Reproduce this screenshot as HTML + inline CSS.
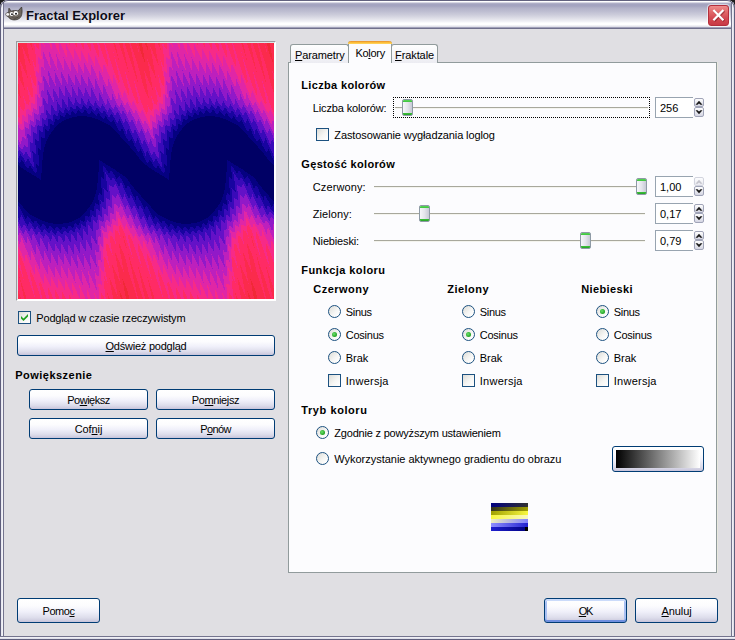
<!DOCTYPE html><html><head><meta charset="utf-8"><title>Fractal Explorer</title><style>
*{box-sizing:border-box;margin:0;padding:0}
html,body{width:735px;height:640px;overflow:hidden;background:#1c1c1c}
body{font-family:"Liberation Sans",sans-serif;font-size:11px;color:#000;position:relative}
#win{position:absolute;left:0;top:0;width:735px;height:640px;background:#e0dfe3;border-radius:8px 8px 0 0;overflow:hidden}
.a{position:absolute}
.t{position:absolute;white-space:nowrap;line-height:13px;height:13px}
.b{font-weight:bold}
u{text-decoration:underline;text-underline-offset:1px;text-decoration-thickness:1px}
.btn{position:absolute;border:1px solid #003c74;border-radius:3px;background:linear-gradient(#ffffff 0%,#fcfcfe 30%,#f0f0fa 55%,#dedeec 80%,#cfcde0 94%,#c6c2da 100%);text-align:center;font-size:11px;white-space:nowrap}
.btn.def{box-shadow:inset 0 2px 0 0 #cbdbfa, inset 0 -2px 0 0 #6f8fe0, inset 2px 0 0 0 #a9c0f2, inset -2px 0 0 0 #a9c0f2}
.cb{position:absolute;width:13px;height:13px;border:1px solid #1c5180;background:linear-gradient(135deg,#dcdcd7,#f6f6f4 55%,#ffffff)}
.rb{position:absolute;width:13px;height:13px;border:1px solid #1c5180;border-radius:50%;background:linear-gradient(135deg,#dcdcd7,#f6f6f4 55%,#ffffff 85%)}
.rb.on::after{content:"";position:absolute;left:3px;top:3px;width:5px;height:5px;border-radius:50%;background:radial-gradient(circle at 40% 40%,#6ce06c,#21a121 70%)}
.line{position:absolute;height:2px;border-top:1px solid #a8a89c;border-bottom:1px solid #f4f4ee}
.sp{position:absolute;border:1px solid #98a4b0;border-right:none;background:#fff;width:38px;height:21px;line-height:19px;padding-left:4px;padding-top:1px;font-size:11px;white-space:nowrap}
.th{position:absolute;width:11px;height:17px;border:1px solid #8e9aa5;border-radius:2px;background:linear-gradient(90deg,#f6f6fa,#e4e5ec 50%,#c8cad6);overflow:hidden}
.th::before{content:"";position:absolute;left:0;right:0;top:0;height:2px;background:linear-gradient(#5ad25a,#3cc43c)}
.th::after{content:"";position:absolute;left:0;right:0;bottom:0;height:2px;background:linear-gradient(#3cc43c,#27a027)}
.sb{position:absolute;width:10px;height:10px;border:1px solid #a0a4b8;border-radius:2px;background:linear-gradient(#fefefe,#d4d5e2)}
.sb.dis{opacity:.45}
.tab{position:absolute;border:1px solid #919b9c;border-bottom:none;border-radius:3px 3px 0 0;background:linear-gradient(#fefefe,#f4f4f8 60%,#ececf2);white-space:nowrap}
</style></head><body><div id="win">
<div class="a" style="left:0;top:0;width:735px;height:29px;background:linear-gradient(#a0a0bc 0,#a0a0bc 1px,#ffffff 1px,#ffffff 2px,#d8d8e4 2px,#d8d8e4 3px,#b8b8cc 3px,#a4a4c0 4px,#a4a4c0 6px,#b2b2c8 8px,#bcbcd0 11px,#cdcddb 15px,#e2e2ea 19px,#f4f4f8 22px,#ffffff 23px,#ffffff 25px,#e4e4ec 26px,#e0e0e8 27px,#a0a0b8 27px,#a0a0b8 28px,#70708c 28px,#70708c 29px)"></div>
<div class="a" style="left:0;top:2px;width:4px;height:638px;background:linear-gradient(90deg,#5e5e7c 0,#5e5e7c 1px,#e4e4ee 1px,#f6f6fa 3px,#74748e 3px)"></div>
<div class="a" style="left:731px;top:2px;width:4px;height:638px;background:linear-gradient(90deg,#74748e 0,#74748e 1px,#f6f6fa 1px,#d8d8e4 3px,#5e5e7c 3px)"></div>
<div class="a" style="left:0;top:636px;width:735px;height:4px;background:linear-gradient(#74748e 0,#74748e 1px,#f6f6fa 1px,#d8d8e4 3px,#5e5e7c 3px)"></div>
<div class="a" style="left:0;top:29px;width:4px;height:607px;background:linear-gradient(90deg,#5e5e7c 0,#5e5e7c 1px,#e4e4ee 1px,#f6f6fa 3px,#74748e 3px)"></div>
<div class="a" style="left:0;top:0;width:735px;height:40px;border:1px solid #62627e;border-bottom:none;border-radius:8px 8px 0 0;pointer-events:none;clip-path:inset(0 0 28px 0)"></div>
<svg class="a" style="left:5px;top:6px" width="18" height="16" viewBox="0 0 18 16"><path d="M4 2.2 L6.2 5.2 C8 4.4 11 4.4 13 5 L16.6 1 C17.4 4 17.2 8 16 10.5 C14.5 13.6 9.5 14.6 6.5 13.4 C4.6 12.7 3.6 11.6 3.4 10.4 C1.6 10.6 0.6 9.2 1 7.8 C1.4 6.6 2.8 6.4 3.8 7 C3.6 5.4 3.6 3.6 4 2.2z" fill="#6e675f" stroke="#3a3632" stroke-width=".8"/><path d="M5.5 10.5 C8 12.6 12.5 12.3 14.8 9.5 C13.8 12.4 9 13.8 5.5 10.5z" fill="#3d3833"/><ellipse cx="6.6" cy="8" rx="1.9" ry="1.9" fill="#fff"/><ellipse cx="10.8" cy="7.3" rx="2.3" ry="2.2" fill="#fff"/><circle cx="7" cy="8.2" r=".9" fill="#111"/><circle cx="11" cy="7.7" r="1" fill="#111"/><ellipse cx="2.6" cy="8.4" rx="1.5" ry="1.3" fill="#f4f4f4"/></svg>
<div class="t b" style="left:26px;top:8px;font-size:13px;line-height:16px;height:16px;color:#0c0c18;letter-spacing:0.000px;text-shadow:0 0 1px rgba(255,255,255,.6)">Fractal Explorer</div>
<div class="a" style="left:708px;top:5px;width:21px;height:21px;border:1px solid #b4303c;border-radius:3px;background:linear-gradient(#ee8c8c 0,#e06668 35%,#d44a52 65%,#c83a46 100%);box-shadow:0 0 0 1px rgba(255,255,255,.55)"></div>
<svg class="a" style="left:708px;top:5px" width="21" height="21"><path d="M5.6 5.2 L15.6 15.4 M15.6 5.2 L5.6 15.4" stroke="#7a1c24" stroke-width="2.6" transform="translate(.6,.6)" opacity=".55"/><path d="M5.4 5 L15.4 15.2 M15.4 5 L5.4 15.2" stroke="#fff" stroke-width="2.2"/></svg>
<div class="a" style="left:16px;top:41px;width:260px;height:260px;border:1px solid;border-color:#9a9a9e #fff #fff #9a9a9e;background:#fff;box-shadow:inset 1px 1px 0 #dde6e6"></div>
<svg class="a" style="left:18px;top:43px" width="256" height="256" viewBox="0 0 256 256" shape-rendering="crispEdges"><rect width="256" height="256" fill="#000065"/><path fill="#050181" d="M0 0h256v122h-1v-1h-1v-1h-1v-1h-1v-1h-1v-1h-1v-1h-1v-2h-1v-1h-1v-1h-1v-2h-1v-1h-1v-1h-1v-1h-1v-1h-1v-1h-1v-2h-1v-1h-1v-1h-1v-1h-1v-1h-1v-1h-1v-1h-1v-1h-1v-1h-1v-1h-1v-2h-1v-1h-1v-1h-1v-1h-1v-1h-1v-1h-1v-1h-1v-1h-1v-1h-1v-1h-1v-1h-2v-1h-2v-1h-2v-1h-2v-1h-2v-1h-2v-1h-3v-1h-3v-1h-5v-1h-10v1h-5v1h-3v1h-3v1h-2v1h-2v1h-1v1h-2v1h-1v1h-1v1h-1v1h-1v1h-1v2h-1v1h-1v1h-1v2h-1v1h-1v2h-1v2h-1v2h-1v3h-1v3h-1v5h-1v8h-1v13h-1v7h-1v-1h-1v-1h-2v-1h-1v-1h-2v-1h-2v-1h-1v-1h-2v-1h-2v-1h-1v-1h-2v-1h-1v-1h-2v-1h-1v-1h-1v-1h-2v-1h-1v-1h-1v-1h-1v-1h-1v-1h-1v-1h-1v-2h-1v-1h-1v-1h-1v-2h-1v-1h-1v-1h-1v-1h-1v-1h-1v-1h-1v-2h-1v-1h-1v-1h-1v-1h-1v-1h-1v-1h-1v-1h-1v-1h-1v-1h-1v-1h-1v-2h-1v-1h-1v-1h-1v-1h-1v-1h-1v-1h-1v-1h-1v-1h-1v-1h-1v-1h-1v-1h-2v-1h-2v-1h-2v-1h-2v-1h-2v-1h-2v-1h-3v-1h-3v-1h-5v-1h-10v1h-5v1h-3v1h-3v1h-2v1h-2v1h-1v1h-2v1h-1v1h-1v1h-1v1h-1v1h-1v2h-1v1h-1v1h-1v2h-1v1h-1v2h-1v2h-1v2h-1v3h-1v3h-1v5h-1v8h-1v13h-1v7h-1v-1h-1v-1h-2v-1h-1v-1h-2v-1h-2v-1h-1v-1h-2v-1h-2v-1h-1v-1h-2v-1h-1v-1h-2v-1h-1v-1h-1v-1h-1zM81 117h1v1h2v1h1v1h2v1h1v1h2v1h2v1h1v1h2v1h2v1h1v1h1v1h2v1h1v1h2v1h1v1h2v1h1v1h1v1h1v2h1v1h1v2h1v1h1v1h1v1h1v2h1v1h1v1h1v1h1v1h1v1h1v1h1v2h1v1h1v1h1v1h1v1h1v1h1v1h1v1h1v1h1v1h1v2h1v1h1v1h1v1h1v1h1v1h1v1h1v1h2v1h2v1h2v1h2v1h2v1h2v1h3v1h3v1h5v1h10v-1h6v-1h3v-1h2v-1h2v-1h2v-1h2v-1h1v-1h1v-1h1v-1h1v-1h1v-1h1v-1h1v-2h1v-1h1v-1h1v-2h1v-1h1v-2h1v-2h1v-3h1v-3h1v-4h1v-7h1v-11h1v-12h1v1h2v1h1v1h2v1h1v1h2v1h2v1h1v1h2v1h2v1h1v1h1v1h2v1h1v1h2v1h1v1h2v1h1v1h1v1h1v2h1v1h1v2h1v1h1v1h1v1h1v2h1v1h1v1h1v1h1v1h1v1h1v1h1v2h1v1h1v1h1v1h1v1h1v98h-256v-97h1v1h1v1h1v1h1v1h1v2h1v1h1v1h1v1h1v1h1v1h1v1h1v1h2v1h2v1h2v1h2v1h2v1h2v1h3v1h3v1h5v1h10v-1h6v-1h3v-1h2v-1h2v-1h2v-1h2v-1h1v-1h1v-1h1v-1h1v-1h1v-1h1v-1h1v-2h1v-1h1v-1h1v-2h1v-1h1v-2h1v-2h1v-3h1v-3h1v-4h1v-7h1v-11h1z"/><path fill="#1804a0" d="M0 0h256v117h-1v-2h-1v-2h-1v-3h-1v-2h-1v-2h-1v2h-1v1h-1v-1h-1v-2h-1v-2h-1v-1h-1v-3h-1v-2h-1v-2h-1v1h-1v1h-2v-2h-1v-1h-1v-2h-1v-2h-1v-3h-1v-2h-2v2h-2v-1h-1v-2h-1v-2h-1v-2h-1v-2h-1v-2h-1v1h-1v1h-2v-1h-1v-1h-1v-1h-1v-2h-1v-1h-1v2h-1v1h-1v-1h-1v-1h-1v-1h-1v-2h-1v-1h-1v1h-1v2h-1v-1h-1v-1h-1v-1h-1v-1h-1v-1h-1v2h-1v1h-2v-1h-1v-2h-1v-1h-2v2h-1v1h-2v-1h-1v-1h-1v-1h-1v1h-1v2h-1v1h-1v-1h-1v-1h-1v-1h-1v1h-1v3h-2v-1h-1v-1h-2v2h-1v2h-2v-1h-2v-1h-1v4h-1v1h-2v-1h-2v3h-1v3h-2v-1h-2v5h-1v2h-2v-1h-1v-1h-1v9h-3v-1h-1v13h-1v-1h-1v-1h-1v7h1v11h-1v-1h-1v-1h-1v4h1v4h-1v1h-1v-1h-1v-1h-1v-2h-1v-1h-1v-2h-2v2h-2v-1h-1v-1h-1v-2h-1v-2h-1v-1h-1v-1h-1v2h-1v1h-1v-1h-1v-2h-1v-2h-1v-2h-1v-3h-1v-2h-1v-2h-1v2h-1v1h-1v-1h-1v-2h-1v-2h-1v-1h-1v-3h-1v-2h-1v-2h-1v1h-1v1h-2v-2h-1v-1h-1v-2h-1v-2h-1v-3h-1v-2h-2v2h-2v-1h-1v-2h-1v-2h-1v-2h-1v-2h-1v-2h-1v1h-1v1h-2v-1h-1v-1h-1v-1h-1v-2h-1v-1h-1v2h-1v1h-1v-1h-1v-1h-1v-1h-1v-2h-1v-1h-1v1h-1v2h-1v-1h-1v-1h-1v-1h-1v-1h-1v-1h-1v2h-1v1h-2v-1h-1v-2h-1v-1h-2v2h-1v1h-2v-1h-1v-1h-1v-1h-1v1h-1v2h-1v1h-1v-1h-1v-1h-1v-1h-1v1h-1v3h-2v-1h-1v-1h-2v2h-1v2h-2v-1h-2v-1h-1v4h-1v1h-2v-1h-2v3h-1v3h-2v-1h-2v5h-1v2h-2v-1h-1v-1h-1v9h-3v-1h-1v13h-1v-1h-1v-1h-1v7h1v11h-1v-1h-1v-1h-1v4h1v4h-1v1h-1v-1h-1v-1h-1v-2h-1v-1h-1v-2h-2v2h-2v-1h-1v-1h-1v-2h-1v-2h-1v-1h-1v-1h-1v2h-1v1h-1v-1h-1zM85 123h1v1h1v1h1v2h1v1h1v2h2v-2h2v1h1v2h1v1h1v2h1v2h1v-1h1v-1h1v-1h1v2h1v1h1v2h1v2h1v2h1v3h2v-2h2v1h1v2h1v3h1v2h1v2h1v1h1v3h1v-4h2v2h1v2h1v1h1v2h1v2h1v2h1v2h1v-2h1v-1h1v1h1v2h1v2h1v2h1v2h1v2h1v2h1v-1h1v-2h1v1h1v1h1v1h1v2h1v1h1v1h1v-2h3v2h1v1h1v1h1v2h1v-1h1v-2h2v1h1v1h1v2h1v1h1v-1h1v-2h2v1h1v1h1v1h1v1h1v-2h1v-1h2v1h1v1h1v1h1v-1h1v-2h3v1h1v1h1v-1h1v-2h3v1h1v1h1v-1h1v-3h1v-1h1v1h1v1h2v-2h1v-3h1v1h2v1h1v-1h1v-5h3v1h1v-1h1v-6h2v1h2v-5h1v-3h1v1h2v1h1v-5h-1v-5h1v-2h1v1h1v1h1v-7h-1v-11h1v1h1v1h1v-7h-1v-6h1v1h1v1h1v2h1v1h1v2h2v-2h2v1h1v2h1v1h1v2h1v2h1v-1h1v-1h1v-1h1v2h1v1h1v2h1v2h1v2h1v3h2v-2h2v1h1v2h1v3h1v2h1v2h1v1h1v3h1v-4h2v2h1v2h1v1h1v2h1v2h1v2h1v-1h1v-2h1v95h-256v-93h1v1h1v2h1v2h1v2h1v2h1v2h1v2h1v-1h1v-2h1v1h1v1h1v1h1v2h1v1h1v1h1v-2h3v2h1v1h1v1h1v2h1v-1h1v-2h2v1h1v1h1v2h1v1h1v-1h1v-2h2v1h1v1h1v1h1v1h1v-2h1v-1h2v1h1v1h1v1h1v-1h1v-2h3v1h1v1h1v-1h1v-2h3v1h1v1h1v-1h1v-3h1v-1h1v1h1v1h2v-2h1v-3h1v1h2v1h1v-1h1v-5h3v1h1v-1h1v-6h2v1h2v-5h1v-3h1v1h2v1h1v-5h-1v-5h1v-2h1v1h1v1h1v-7h-1v-11h1v1h1v1h1v-7h-1z"/><path fill="#390ab9" d="M0 0h256v113h-1v-3h-1v-2h-1v-2h-1v-2h-1v-2h-1v-2h-1v-3h-1v-2h-1v3h-1v2h-1v-2h-1v-2h-1v-2h-1v-2h-1v-2h-1v-2h-1v-2h-1v1h-1v4h-1v-3h-1v-2h-1v-2h-1v-2h-1v-2h-1v-2h-1v-2h-1v2h-1v2h-1v-1h-1v-2h-1v-2h-1v-1h-1v-2h-1v-1h-1v1h-1v2h-2v-2h-1v-1h-1v-2h-1v-1h-2v2h-2v-1h-1v-1h-1v-2h-1v-1h-2v2h-1v1h-1v-1h-1v-1h-1v-2h-1v-1h-2v2h-1v1h-1v-1h-1v-1h-1v-1h-1v-1h-1v2h-1v2h-2v-1h-1v-1h-1v-1h-2v3h-3v-1h-1v-1h-2v3h-1v1h-1v-1h-1v-1h-1v-1h-1v2h-1v3h-2v-1h-1v-1h-1v-1h-1v3h-1v3h-2v-1h-1v-1h-1v1h-1v6h-1v-1h-1v-1h-3v7h-2v-1h-1v-1h-1v3h-1v5h-2v-1h-1v-1h-1v11h-2v-1h-1v-1h-1v6h1v9h-1v-1h-1v-1h-1v-1h-1v2h1v9h1v5h-1v-1h-1v-2h-1v-1h-1v-2h-1v-2h-2v2h-1v1h-1v-2h-1v-2h-1v-1h-1v-2h-1v-2h-1v-2h-1v1h-1v4h-1v-3h-1v-2h-1v-2h-1v-2h-1v-2h-1v-2h-1v-3h-1v-2h-1v3h-1v2h-1v-2h-1v-2h-1v-2h-1v-2h-1v-2h-1v-2h-1v-2h-1v1h-1v4h-1v-3h-1v-2h-1v-2h-1v-2h-1v-2h-1v-2h-1v-2h-1v2h-1v2h-1v-1h-1v-2h-1v-2h-1v-1h-1v-2h-1v-1h-1v1h-1v2h-2v-2h-1v-1h-1v-2h-1v-1h-2v2h-2v-1h-1v-1h-1v-2h-1v-1h-2v2h-1v1h-1v-1h-1v-1h-1v-2h-1v-1h-2v2h-1v1h-1v-1h-1v-1h-1v-1h-1v-1h-1v2h-1v2h-2v-1h-1v-1h-1v-1h-2v3h-3v-1h-1v-1h-2v3h-1v1h-1v-1h-1v-1h-1v-1h-1v2h-1v3h-2v-1h-1v-1h-1v-1h-1v3h-1v3h-2v-1h-1v-1h-1v1h-1v6h-1v-1h-1v-1h-3v7h-2v-1h-1v-1h-1v3h-1v5h-2v-1h-1v-1h-1v11h-2v-1h-1v-1h-1v6h1v9h-1v-1h-1v-1h-1v-1h-1v2h1v9h1v5h-1v-1h-1v-2h-1v-1h-1v-2h-1v-2h-2v2h-1v1h-1v-2h-1v-2h-1v-1h-1v-1h-1v-2h-1v2h-1v2h-1zM87 129h1v2h-1zM215 129h1v2h-1zM88 131h1v1h1v2h1v1h1v2h2v-2h2v1h1v2h1v1h1v2h1v2h2v-3h2v2h1v3h1v2h1v2h1v2h1v2h1v2h2v-3h1v1h1v2h1v2h1v2h1v2h1v2h1v2h1v1h1v-3h2v2h1v1h1v3h1v2h1v2h1v2h1v2h1v-3h1v-2h1v2h1v2h1v2h1v2h1v1h1v2h1v-2h1v-2h1v1h1v1h1v2h1v1h1v2h2v-2h1v-1h1v2h1v1h1v1h1v2h2v-2h1v-1h1v1h1v1h1v1h1v1h2v-2h1v-1h1v2h1v1h1v1h1v1h1v-2h1v-2h2v1h1v1h1v1h2v-2h1v-1h2v1h1v1h2v-2h1v-1h2v1h1v1h2v-3h1v-2h1v1h1v1h1v1h1v-2h1v-4h1v1h1v1h2v1h1v-5h1v-2h1v1h1v1h2v-5h1v-2h1v1h1v1h2v-8h2v1h1v1h1v-7h1v-3h-1v-1h1v1h1v1h2v-13h-1v-1h1v1h1v1h1v1h1v1h1v-2h-1v-9h-1v-7h1v1h1v2h1v1h1v2h2v-2h2v1h1v2h1v1h1v2h1v2h2v-3h2v2h1v3h1v2h1v2h1v2h1v2h1v2h2v-3h1v1h1v2h1v2h1v2h1v2h1v2h1v2h1v1h1v-3h2v1h1v2h1v1h1v1h1v1h1v87h-256v-81h1v2h1v-3h1v-2h1v2h1v2h1v2h1v2h1v1h1v2h1v-2h1v-2h1v1h1v1h1v2h1v1h1v2h2v-2h1v-1h1v2h1v1h1v1h1v2h2v-2h1v-1h1v1h1v1h1v1h1v1h2v-2h1v-1h1v2h1v1h1v1h1v1h1v-2h1v-2h2v1h1v1h1v1h2v-2h1v-1h2v1h1v1h2v-2h1v-1h2v1h1v1h2v-3h1v-2h1v1h1v1h1v1h1v-2h1v-4h1v1h1v1h2v1h1v-5h1v-2h1v1h1v1h2v-5h1v-2h1v1h1v1h2v-8h2v1h1v1h1v-7h1v-3h-1v-1h1v1h1v1h2v-13h-1v-1h1v1h1v1h1v1h1v1h1v-2h-1v-9h-1z"/><path fill="#6411c7" d="M0 0h256v99h-1v-2h-1v1h-1v3h-1v-1h-1v-3h-1v-2h-1v-2h-1v-2h-1v-2h-1v-2h-2v3h-2v-2h-1v-2h-1v-3h-1v-2h-1v-2h-1v-1h-1v-2h-1v3h-1v1h-1v-2h-1v-2h-1v-2h-1v-2h-1v-2h-1v-1h-1v1h-1v2h-2v-2h-1v-1h-1v-2h-1v-1h-1v-1h-1v2h-1v2h-1v-2h-1v-1h-1v-2h-1v-1h-1v-2h-1v2h-1v2h-1v-1h-1v-1h-1v-1h-1v-2h-1v-2h-1v2h-1v3h-1v-1h-1v-1h-1v-1h-1v-2h-1v-2h-1v3h-1v3h-1v-1h-1v-1h-1v-2h-1v-2h-1v-1h-1v6h-2v-1h-1v-1h-1v-2h-1v-2h-1v5h-1v2h-1v-1h-1v-2h-1v-1h-1v-2h-1v-2h-1v10h-1v-2h-1v-1h-1v-2h-1v-2h-1v-1h-1v9h-1v-1h-1v-2h-1v-1h-1v-2h-1v9h-2v-1h-1v-2h-1v-2h-1v-1h-1v10h-1v-1h-1v-1h-1v-2h-1v-1h-1v5h1v3h-1v2h-2v-1h-1v-1h-1v8h-3v-1h-1v1h-1v8h-1v-1h-2v-1h-1v11h-2v-1h-1v10h1v6h-1v-1h-1v-1h-1v-2h-1v-2h-2v2h-1v1h-1v-2h-1v-2h-1v-3h-1v-2h-1v-2h-1v-2h-1v-2h-1v1h-1v3h-1v-1h-1v-3h-1v-2h-1v-2h-1v-2h-1v-2h-1v-2h-2v3h-2v-2h-1v-2h-1v-3h-1v-2h-1v-2h-1v-1h-1v-2h-1v3h-1v1h-1v-2h-1v-2h-1v-2h-1v-2h-1v-2h-1v-1h-1v1h-1v2h-2v-2h-1v-1h-1v-2h-1v-1h-1v-1h-1v2h-1v2h-1v-2h-1v-1h-1v-2h-1v-1h-1v-2h-1v2h-1v2h-1v-1h-1v-1h-1v-1h-1v-2h-1v-2h-1v2h-1v3h-1v-1h-1v-1h-1v-1h-1v-2h-1v-2h-1v3h-1v3h-1v-1h-1v-1h-1v-2h-1v-2h-1v-1h-1v6h-2v-1h-1v-1h-1v-2h-1v-2h-1v5h-1v2h-1v-1h-1v-2h-1v-1h-1v-2h-1v-2h-1v10h-1v-2h-1v-1h-1v-2h-1v-2h-1v-1h-1v9h-1v-1h-1v-2h-1v-1h-1v-2h-1v9h-2v-1h-1v-2h-1v-2h-1v-1h-1v10h-1v-1h-1v-1h-1v-2h-1v-1h-1v5h1v3h-1v2h-2v-1h-1v-1h-1v8h-3v-1h-1v1h-1v8h-1v-1h-2v-1h-1v11h-2v-1h-1v10h1v6h-1v-1h-1v-1h-1v-2h-1v-2h-2v2h-1v1h-1v-2h-1v-1h-1v-1h-1v-1h-1v1h-1zM39 57h-1v1h1zM167 57h-1v1h1zM97 141h1v2h1v2h1v2h1v3h1v2h1v2h1v2h1v-2h1v-3h1v3h1v2h1v2h1v2h1v2h1v2h1v2h1v-1h1v-2h2v2h1v2h1v2h1v2h1v3h1v2h2v-2h1v-1h1v2h1v2h1v2h1v2h1v2h1v2h1v-1h1v-2h2v1h1v2h1v1h1v2h2v-2h1v-1h1v1h1v2h1v1h1v2h1v1h1v-1h1v-2h2v2h1v1h1v1h1v2h1v-2h1v-2h1v1h1v1h1v1h1v2h1v2h1v-2h1v-4h1v1h1v1h1v2h1v2h1v1h1v-6h2v1h1v1h1v2h1v2h1v-1h1v-6h1v1h1v1h1v2h1v2h1v1h1v-8h1v1h1v1h1v2h1v2h1v1h1v-9h1v1h1v2h1v1h1v2h1v2h1v-11h1v2h1v1h1v2h1v1h1v-10h1v1h1v2h1v1h1v2h1v-11h1v1h1v1h1v1h1v-3h1v-5h2v1h1v1h1v-10h1v1h1v1h2v-11h1v1h2v1h1v-9h-1v-6h1v1h2v1h2v-2h1v-1h1v2h1v2h1v2h1v3h1v2h1v2h1v2h1v-2h1v-3h1v3h1v2h1v2h1v2h1v2h1v2h1v2h1v-1h1v-2h2v2h1v2h1v2h1v2h1v1h1v-1h1v-2h2v1h1v1h1v1h1v84h-256v-77h1v2h1v2h1v2h1v-1h1v-2h2v1h1v2h1v1h1v2h2v-2h1v-1h1v1h1v2h1v1h1v2h1v1h1v-1h1v-2h2v2h1v1h1v1h1v2h1v-2h1v-2h1v1h1v1h1v1h1v2h1v2h1v-2h1v-4h1v1h1v1h1v2h1v2h1v1h1v-6h2v1h1v1h1v2h1v2h1v-1h1v-6h1v1h1v1h1v2h1v2h1v1h1v-8h1v1h1v1h1v2h1v2h1v1h1v-9h1v1h1v2h1v1h1v2h1v2h1v-11h1v2h1v1h1v2h1v1h1v-10h1v1h1v2h1v1h1v2h1v-11h1v1h1v1h1v1h1v-3h1v-5h2v1h1v1h1v-10h1v1h1v1h2v-11h1v1h2v1h1v-9h-1v-6h1v1h2v1h2v-2h1z"/><path fill="#9119c8" d="M0 0h256v95h-1v-3h-1v-2h-1v-2h-1v-2h-1v2h-1v2h-1v-1h-1v-2h-1v-2h-1v-2h-1v-2h-1v-2h-1v-2h-2v2h-2v-2h-1v-2h-1v-2h-1v-2h-1v-1h-1v-2h-2v3h-1v-1h-1v-2h-1v-1h-1v-2h-1v-1h-1v-2h-1v2h-1v2h-1v-1h-1v-1h-1v-2h-1v-2h-1v-2h-1v-2h-1v5h-1v1h-1v-2h-1v-2h-1v-2h-1v-2h-1v-2h-1v-2h-1v8h-1v-1h-1v-2h-1v-2h-1v-2h-1v-2h-1v-2h-1v-2h-1v9h-1v-1h-1v-2h-1v-2h-1v-2h-1v-2h-1v5h-1v3h-1v-2h-1v-2h-1v-2h-1v-1h-1v-2h-1v9h-1v-1h-1v-2h-1v-2h-1v-2h-1v-2h-1v10h-1v-2h-1v-2h-1v-1h-1v-2h-1v-2h-1v-2h-1v10h-1v-1h-1v-2h-1v-2h-1v-2h-1v-2h-1v11h-1v-2h-1v-2h-1v-2h-1v-1h-1v-2h-1v8h1v5h-1v-2h-1v-2h-1v-2h-1v-2h-1v-2h-1v-2h-1v5h1v9h-1v-1h-1v-2h-1v-2h-1v-1h-1v7h1v8h-3v2h-1v6h-1v-1h-2v-1h-1v6h-1v2h-2v-1h-1v-1h-1v11h-1v-1h-1v-1h-2v4h1v9h-2v-1h-1v-2h-1v-3h-1v-2h-1v3h-1v2h-1v-2h-1v-2h-1v-2h-1v-3h-1v-2h-1v-2h-1v-2h-1v2h-1v2h-1v-1h-1v-2h-1v-2h-1v-2h-1v-2h-1v-2h-1v-2h-2v2h-2v-2h-1v-2h-1v-2h-1v-2h-1v-1h-1v-2h-2v3h-1v-1h-1v-2h-1v-1h-1v-2h-1v-1h-1v-2h-1v2h-1v2h-1v-1h-1v-1h-1v-2h-1v-2h-1v-2h-1v-2h-1v5h-1v1h-1v-2h-1v-2h-1v-2h-1v-2h-1v-2h-1v-2h-1v8h-1v-1h-1v-2h-1v-2h-1v-2h-1v-2h-1v-2h-1v-2h-1v9h-1v-1h-1v-2h-1v-2h-1v-2h-1v-2h-1v5h-1v3h-1v-2h-1v-2h-1v-2h-1v-1h-1v-2h-1v9h-1v-1h-1v-2h-1v-2h-1v-2h-1v-2h-1v10h-1v-2h-1v-2h-1v-1h-1v-2h-1v-2h-1v-2h-1v10h-1v-1h-1v-2h-1v-2h-1v-2h-1v-2h-1v11h-1v-2h-1v-2h-1v-2h-1v-1h-1v-2h-1v8h1v5h-1v-2h-1v-2h-1v-2h-1v-2h-1v-2h-1v-2h-1v5h1v9h-1v-1h-1v-2h-1v-2h-1v-1h-1v7h1v8h-3v2h-1v6h-1v-1h-2v-1h-1v6h-1v2h-2v-1h-1v-1h-1v11h-1v-1h-1v-1h-2v4h1v9h-2v-1h-1v-1h-1v2h-1v2h-2v-1h-1v-1h-1v-2h-1zM54 42h-1v1h1zM182 42h-1v1h1zM99 151h1v1h1v2h1v2h1v2h1v2h1v2h1v2h1v2h1v-3h1v-1h1v2h1v2h1v2h1v2h1v2h1v2h1v2h1v-3h1v-2h1v3h1v2h1v2h1v2h1v2h1v2h1v2h1v-2h1v-3h1v2h1v2h1v2h1v1h1v2h1v1h1v-2h1v-2h1v1h1v2h1v1h1v2h1v2h1v2h1v-5h1v-1h1v2h1v2h1v2h1v2h1v2h1v2h1v-8h1v1h1v2h1v2h1v2h1v2h1v2h1v2h1v-9h1v2h1v2h1v2h1v2h1v1h2v-7h1v2h1v2h1v1h1v2h1v2h1v-9h1v1h1v2h1v2h1v2h1v1h1v2h1v-9h1v1h1v2h1v2h1v2h1v2h1v-10h1v1h1v2h1v2h1v2h1v2h1v-11h1v2h1v2h1v2h1v1h1v2h1v-11h1v2h1v2h1v2h1v2h1v2h1v-7h-1v-7h1v2h1v1h1v2h1v2h1v1h1v-4h-1v-10h2v-1h1v-9h1v1h2v1h1v-1h1v-7h2v1h1v1h1v-10h2v1h1v1h1v-13h1v1h1v1h1v1h1v-2h1v-2h1v1h1v2h1v2h1v2h1v2h1v2h1v2h1v2h1v-3h1v-1h1v2h1v2h1v2h1v2h1v2h1v2h2v-2h1v-1h1v2h1v1h1v1h1v2h1v1h1v-3h1v-1h1v1h1v1h1v80h-256v-73h1v2h1v2h1v1h1v2h1v1h1v-2h1v-2h1v1h1v2h1v1h1v2h1v2h1v2h1v-5h1v-1h1v2h1v2h1v2h1v2h1v2h1v2h1v-8h1v1h1v2h1v2h1v2h1v2h1v2h1v2h1v-9h1v2h1v2h1v2h1v2h1v1h2v-7h1v2h1v2h1v1h1v2h1v2h1v-9h1v1h1v2h1v2h1v2h1v1h1v2h1v-9h1v1h1v2h1v2h1v2h1v2h1v-10h1v1h1v2h1v2h1v2h1v2h1v-11h1v2h1v2h1v2h1v1h1v2h1v-11h1v2h1v2h1v2h1v2h1v2h1v-7h-1v-7h1v2h1v1h1v2h1v2h1v1h1v-4h-1v-10h2v-1h1v-9h1v1h2v1h1v-1h1v-7h2v1h1v1h1v-10h2v1h1v1h1v-13h1v1h1v1h1v1h1v-2h1z"/><path fill="#bd20bd" d="M0 0h256v90h-1v-2h-1v-2h-1v-2h-1v-2h-1v-2h-1v-2h-1v-2h-1v2h-1v3h-1v-3h-1v-2h-1v-2h-1v-1h-1v-2h-1v-2h-1v-2h-1v2h-1v2h-1v-2h-1v-2h-1v-2h-1v-1h-1v-2h-1v-2h-1v2h-1v2h-1v-1h-1v-1h-1v-2h-1v-2h-1v-2h-1v-2h-1v-3h-1v6h-2v-2h-1v-2h-1v-2h-1v-2h-1v-3h-1v-2h-1v-2h-1v9h-1v-2h-1v-2h-1v-2h-1v-2h-1v-2h-1v-3h-1v-2h-1v10h-1v-2h-1v-2h-1v-2h-1v-2h-1v-2h-1v-2h-1v9h-1v-2h-1v-1h-1v-2h-1v-2h-1v-2h-1v-2h-1v10h-1v-2h-1v-2h-1v-2h-1v-2h-1v-2h-1v10h-1v-2h-1v-1h-1v-2h-1v-2h-1v-2h-1v-2h-1v10h-1v-2h-1v-2h-1v-2h-1v-2h-1v-2h-1v-2h-1v6h1v7h-1v-2h-1v-2h-1v-2h-1v-2h-1v-2h-1v-2h-1v10h1v3h-1v-2h-1v-2h-1v-2h-1v-2h-1v-2h-1v-3h-1v-2h-1v5h1v9h-1v-2h-1v-2h-1v-2h-1v-2h-1v-1h-1v5h1v10h-1v-1h-1v1h-1v6h1v9h-1v1h-1v-1h-1v8h-1v1h-1v-1h-2v-1h-1v9h-1v-1h-2v-1h-1v4h-1v5h-1v-1h-2v-1h-1v9h1v3h-1v-1h-1v-1h-1v-2h-1v-2h-1v-2h-1v-2h-1v3h-1v1h-1v-2h-1v-2h-1v-2h-1v-2h-1v-2h-1v-2h-1v-2h-1v2h-1v3h-1v-3h-1v-2h-1v-2h-1v-1h-1v-2h-1v-2h-1v-2h-1v2h-1v2h-1v-2h-1v-2h-1v-2h-1v-1h-1v-2h-1v-2h-1v2h-1v2h-1v-1h-1v-1h-1v-2h-1v-2h-1v-2h-1v-2h-1v-3h-1v6h-2v-2h-1v-2h-1v-2h-1v-2h-1v-3h-1v-2h-1v-2h-1v9h-1v-2h-1v-2h-1v-2h-1v-2h-1v-2h-1v-3h-1v-2h-1v10h-1v-2h-1v-2h-1v-2h-1v-2h-1v-2h-1v-2h-1v9h-1v-2h-1v-1h-1v-2h-1v-2h-1v-2h-1v-2h-1v10h-1v-2h-1v-2h-1v-2h-1v-2h-1v-2h-1v10h-1v-2h-1v-1h-1v-2h-1v-2h-1v-2h-1v-2h-1v10h-1v-2h-1v-2h-1v-2h-1v-2h-1v-2h-1v-2h-1v6h1v7h-1v-2h-1v-2h-1v-2h-1v-2h-1v-2h-1v-2h-1v10h1v3h-1v-2h-1v-2h-1v-2h-1v-2h-1v-2h-1v-3h-1v-2h-1v5h1v9h-1v-2h-1v-2h-1v-2h-1v-2h-1v-1h-1v5h1v10h-1v-1h-1v1h-1v6h1v9h-1v1h-1v-1h-1v8h-1v1h-1v-1h-2v-1h-1v9h-1v-1h-2v-1h-1v4h-1v5h-1v-1h-2v-1h-1v9h1v3h-1v-1h-1v-1h-2v4h-1v3h-1v-2h-1v-2h-1zM37 27h-1v1h1zM165 27h-1v1h1zM31 42h1v2h-1zM159 42h1v2h-1zM96 161h2v1h1v1h1v2h1v-1h1v-3h1v2h1v1h1v3h1v2h1v2h1v2h1v2h2v-3h2v2h1v2h1v3h1v2h1v2h1v2h1v1h1v-3h1v-1h1v2h1v2h1v2h1v2h1v1h1v2h1v-1h1v-2h2v2h1v1h1v2h1v2h1v2h1v1h1v-6h1v2h1v2h1v2h1v2h1v3h1v2h1v2h1v2h1v-9h1v2h1v2h1v2h1v3h1v2h1v2h1v2h1v-9h1v2h1v2h1v2h1v2h1v2h1v2h1v-10h1v2h1v2h1v2h1v2h1v2h1v2h1v-10h1v2h1v2h1v1h1v2h1v2h1v-10h1v2h1v2h1v2h1v2h1v2h1v2h1v-10h1v2h1v2h1v2h1v2h1v2h1v2h1v-7h-1v-6h1v2h1v2h1v2h1v2h1v2h1v2h1v-11h1v2h1v2h1v2h1v2h1v2h1v3h1v-6h-1v-8h1v2h1v2h1v2h1v2h1v2h1v2h1v-3h-1v-9h-1v-5h1v2h3v-7h-1v-8h1v-1h1v1h1v-7h-1v-1h1v-3h2v1h1v1h1v-6h1v-2h2v1h1v1h1v-9h2v1h2v-10h2v1h1v1h1v2h1v-1h1v-3h1v2h1v1h1v3h1v2h1v2h1v2h1v2h2v-3h2v2h1v2h1v1h1v2h1v1h2v-2h2v1h1v1h1v2h1v2h1v3h2v-6h1v75h-256v-64h1v-2h2v2h1v1h1v2h1v2h1v2h1v1h1v-6h1v2h1v2h1v2h1v2h1v3h1v2h1v2h1v2h1v-9h1v2h1v2h1v2h1v3h1v2h1v2h1v2h1v-9h1v2h1v2h1v2h1v2h1v2h1v2h1v-10h1v2h1v2h1v2h1v2h1v2h1v2h1v-10h1v2h1v2h1v1h1v2h1v2h1v-10h1v2h1v2h1v2h1v2h1v2h1v2h1v-10h1v2h1v2h1v2h1v2h1v2h1v2h1v-7h-1v-6h1v2h1v2h1v2h1v2h1v2h1v2h1v-11h1v2h1v2h1v2h1v2h1v2h1v3h1v-6h-1v-8h1v2h1v2h1v2h1v2h1v2h1v2h1v-3h-1v-9h-1v-5h1v2h3v-7h-1v-8h1v-1h1v1h1v-7h-1v-1h1v-3h2v1h1v1h1v-6h1v-2h2v1h1v1h1v-9h2v1h2zM65 211h1v1h-1zM193 211h1v1h-1zM67 225h-1v1h1zM195 225h-1v1h1z"/><path fill="#e026a6" d="M0 0h256v78h-2v3h-1v-1h-1v-2h-1v-2h-1v-2h-1v-2h-1v-2h-1v-2h-1v-1h-1v3h-2v-2h-1v-2h-1v-1h-1v-2h-1v-2h-1v-2h-1v1h-1v2h-2v-2h-1v-2h-1v-1h-1v-2h-1v-3h-1v-2h-1v6h-2v-3h-1v-2h-1v-3h-1v-2h-1v-3h-1v-2h-1v-2h-1v-3h-1v7h-2v-2h-1v-2h-1v-2h-1v-3h-1v-2h-1v-2h-1v-2h-1v9h-1v-2h-1v-2h-1v-3h-1v-2h-1v-2h-1v-2h-1v-2h-1v10h-1v-2h-1v-2h-1v-2h-1v-2h-1v-2h-1v-2h-1v10h-1v-2h-1v-2h-1v-2h-1v-2h-1v-2h-1v10h-1v-2h-1v-2h-1v-2h-1v-2h-1v-2h-1v-2h-1v10h-1v-2h-1v-2h-1v-2h-1v-2h-1v-2h-1v-2h-1v11h-1v-2h-1v-3h-1v-2h-1v-2h-1v-2h-1v-2h-1v-3h-1v3h1v11h-1v-2h-1v-2h-1v-3h-1v-2h-1v-2h-1v-3h-1v-2h-1v5h1v8h1v3h-1v-2h-1v-2h-1v-3h-1v-2h-1v-2h-1v-3h-1v-2h-1v7h1v9h-1v-1h-2v10h1v6h-2v-1h-1v-1h-1v4h1v9h1v4h-1v-1h-1v-2h-1v15h-1v-1h-2v-1h-1v4h-1v4h-1v-1h-2v-1h-1v9h-1v-1h-2v-1h-1v8h-1v1h-1v-2h-1v-2h-1v-2h-1v-1h-1v-2h-2v3h-1v-1h-1v-2h-1v-2h-1v-2h-1v-2h-1v-2h-1v-2h-1v-1h-1v3h-2v-2h-1v-2h-1v-1h-1v-2h-1v-2h-1v-2h-1v1h-1v2h-2v-2h-1v-2h-1v-1h-1v-2h-1v-3h-1v-2h-1v6h-2v-3h-1v-2h-1v-3h-1v-2h-1v-3h-1v-2h-1v-2h-1v-3h-1v7h-2v-2h-1v-2h-1v-2h-1v-3h-1v-2h-1v-2h-1v-2h-1v9h-1v-2h-1v-2h-1v-3h-1v-2h-1v-2h-1v-2h-1v-2h-1v10h-1v-2h-1v-2h-1v-2h-1v-2h-1v-2h-1v-2h-1v10h-1v-2h-1v-2h-1v-2h-1v-2h-1v-2h-1v10h-1v-2h-1v-2h-1v-2h-1v-2h-1v-2h-1v-2h-1v10h-1v-2h-1v-2h-1v-2h-1v-2h-1v-2h-1v-2h-1v11h-1v-2h-1v-3h-1v-2h-1v-2h-1v-2h-1v-2h-1v-3h-1v3h1v11h-1v-2h-1v-2h-1v-3h-1v-2h-1v-2h-1v-3h-1v-2h-1v5h1v8h1v3h-1v-2h-1v-2h-1v-3h-1v-2h-1v-2h-1v-3h-1v-2h-1v7h1v9h-1v-1h-2v10h1v6h-2v-1h-1v-1h-1v4h1v9h1v4h-1v-1h-1v-2h-1v15h-1v-1h-2v-1h-1v4h-1v4h-1v-1h-2v-1h-1v9h-1v-1h-2v-1h-1v8h-1v1h-2v-1h-1v-1h-1v-3h-1zM46 14h-1v1h1zM174 14h-1v1h1zM26 25h1v2h-1zM39 25h1v2h-1zM154 25h1v2h-1zM167 25h1v2h-1zM98 168h1v1h2v3h1v2h1v2h1v-2h1v-2h1v1h1v2h1v2h1v2h1v2h1v2h1v2h2v-3h1v1h1v2h1v2h1v2h1v2h1v2h1v1h1v-1h1v-2h1v1h1v1h1v2h1v2h1v1h1v3h1v-2h1v-4h1v2h1v3h1v2h1v3h1v2h1v2h1v3h1v2h1v3h1v-9h1v2h1v2h1v2h1v3h1v2h1v2h1v2h1v3h1v-10h1v3h1v2h1v2h1v2h1v2h1v2h1v2h1v-9h1v2h1v2h1v2h1v2h1v2h1v2h1v-10h1v2h1v2h1v2h1v2h1v2h1v-11h1v2h1v2h1v2h1v2h1v2h1v2h1v-10h1v2h1v2h1v2h1v2h1v3h1v2h1v-11h1v2h1v2h1v2h1v3h1v2h1v2h1v2h1v-3h-1v-10h1v2h1v2h1v2h1v3h1v2h1v2h1v3h1v-5h-1v-8h-1v-4h1v3h1v2h1v2h1v3h1v2h1v2h1v3h1v2h1v-3h-1v-8h-1v-6h1v2h1v1h2v-10h-1v-6h3v-9h-1v-7h1v2h1v1h1v-14h-1v-3h1v1h1v1h3v-7h1v1h2v1h1v-3h1v-5h2v1h1v1h1v-10h1v1h2v3h1v2h1v2h1v-2h1v-2h1v1h1v2h1v2h1v2h1v2h1v1h2v-2h2v1h1v1h1v2h1v2h1v3h1v2h1v-5h1v-1h1v2h1v3h1v2h1v2h1v2h1v60h-256v-58h1v3h1v-2h1v-4h1v2h1v3h1v2h1v3h1v2h1v2h1v3h1v2h1v3h1v-9h1v2h1v2h1v2h1v3h1v2h1v2h1v2h1v3h1v-10h1v3h1v2h1v2h1v2h1v2h1v2h1v2h1v-9h1v2h1v2h1v2h1v2h1v2h1v2h1v-10h1v2h1v2h1v2h1v2h1v2h1v-11h1v2h1v2h1v2h1v2h1v2h1v2h1v-10h1v2h1v2h1v2h1v2h1v3h1v2h1v-11h1v2h1v2h1v2h1v3h1v2h1v2h1v2h1v-3h-1v-10h1v2h1v2h1v2h1v3h1v2h1v2h1v3h1v-5h-1v-8h-1v-4h1v3h1v2h1v2h1v3h1v2h1v2h1v3h1v2h1v-3h-1v-8h-1v-6h1v2h1v1h2v-10h-1v-6h3v-9h-1v-7h1v2h1v1h1v-14h-1v-3h1v1h1v1h3v-7h1v1h2v1h1v-3h1v-5h2v1h1v1h1zM84 217h-1v2h1zM212 217h-1v2h1zM63 227h1v1h-1zM76 227h1v1h-1zM191 227h1v1h-1zM204 227h1v1h-1zM44 234h-1v1h1zM172 234h-1v1h1zM58 239h-1v1h1zM186 239h-1v1h1z"/><path fill="#f72a87" d="M0 0h23v13h1v3h-2v-1h-1v-1h-1v7h1v9h-1v-1h-1v-1h-1v6h1v17h-2v10h-2v-1h-2v8h-1v-1h-1v-1h-2v1h-1v7h-1v-1h-1v-1h-2v9h-2v-1h-1v-1h-1zM24 0h2v2h-1v-1h-1zM31 0h2v1h1v5h-1v-2h-1v-3h-1zM37 0h4v9h-1v-2h-1v-2h-1v-3h-1zM42 0h109v13h1v3h-2v-1h-1v-1h-1v7h1v9h-1v-1h-1v-1h-1v6h1v17h-2v10h-2v-1h-2v8h-1v-1h-1v-1h-2v1h-1v7h-1v-1h-1v-1h-2v9h-1v-2h-1v-2h-1v-2h-1v-2h-1v-2h-1v-2h-1v-2h-1v1h-1v2h-1v-1h-1v-1h-1v-2h-1v-2h-1v-2h-1v-2h-1v-2h-1v1h-1v3h-1v-2h-1v-1h-1v-2h-1v-2h-1v-3h-1v-2h-1v-2h-1v2h-1v4h-1v-2h-1v-3h-1v-2h-1v-2h-1v-3h-1v-2h-1v-3h-1v-2h-1v-3h-1v8h-1v-2h-1v-2h-1v-3h-1v-2h-1v-2h-1v-3h-1v-2h-1v-2h-2v7h-1v-3h-1v-2h-1v-2h-1v-2h-1v-3h-1v-2h-1v-2h-1v10h-1v-3h-1v-2h-1v-2h-1v-2h-1v-2h-1v-2h-1v10h-1v-2h-1v-2h-1v-2h-1v-2h-1v-2h-1v-2h-1v10h-1v-2h-1v-2h-1v-2h-1v-2h-1v-2h-1v-2h-1v10h-1v-2h-1v-2h-1v-2h-1v-2h-1v-2h-1v-2h-1v-3h-1v6h1v7h-1v-2h-1v-2h-1v-3h-1v-2h-1v-2h-1v-2h-1zM152 0h2v2h-1v-1h-1zM159 0h2v1h1v5h-1v-2h-1v-3h-1zM165 0h4v9h-1v-2h-1v-2h-1v-3h-1zM170 0h86v73h-1v-2h-1v-2h-1v-2h-1v1h-1v2h-1v-1h-1v-1h-1v-2h-1v-2h-1v-2h-1v-2h-1v-2h-1v1h-1v3h-1v-2h-1v-1h-1v-2h-1v-2h-1v-3h-1v-2h-1v-2h-1v2h-1v4h-1v-2h-1v-3h-1v-2h-1v-2h-1v-3h-1v-2h-1v-3h-1v-2h-1v-3h-1v8h-1v-2h-1v-2h-1v-3h-1v-2h-1v-2h-1v-3h-1v-2h-1v-2h-2v7h-1v-3h-1v-2h-1v-2h-1v-2h-1v-3h-1v-2h-1v-2h-1v10h-1v-3h-1v-2h-1v-2h-1v-2h-1v-2h-1v-2h-1v10h-1v-2h-1v-2h-1v-2h-1v-2h-1v-2h-1v-2h-1v10h-1v-2h-1v-2h-1v-2h-1v-2h-1v-2h-1v-2h-1v10h-1v-2h-1v-2h-1v-2h-1v-2h-1v-2h-1v-2h-1v-3h-1v6h1v7h-1v-2h-1v-2h-1v-3h-1v-2h-1v-2h-1v-2h-1zM26 2h1v2h-1zM154 2h1v2h-1zM41 9h1v2h-1zM169 9h1v2h-1zM100 175h1v1h1v2h1v2h1v2h1v2h1v2h1v-3h1v-2h1v3h1v2h1v2h1v2h1v1h1v2h1v2h1v-2h1v-2h1v2h1v2h1v2h1v1h1v3h1v2h1v2h1v-7h1v1h1v2h1v3h1v2h1v2h1v2h1v3h1v2h1v3h1v-6h2v3h1v2h1v3h1v2h1v2h1v3h1v2h1v2h1v-9h1v3h1v2h1v2h1v2h1v3h1v2h1v2h1v2h1v-9h1v2h1v2h1v2h1v2h1v2h1v2h1v-9h1v2h1v2h1v2h1v2h1v2h1v1h1v-9h1v2h1v1h1v2h1v2h1v2h1v2h1v-10h1v2h1v2h1v3h1v2h1v2h1v2h1v2h1v-5h-1v-7h1v2h1v2h1v2h1v2h1v3h1v2h1v2h1v-10h-1v-3h1v2h1v3h1v2h1v2h1v2h1v3h-114v-12h-1v-3h3v1h1v-4h-1v-10h-1v-3h1v2h1v1h1v1h1v-13h-1v-10h1v-12h1v1h2v1h1v-6h1v-2h2v1h1v1h1v-8h3v1h2zM228 175h1v1h1v2h1v2h1v2h1v2h2v-3h2v2h1v1h1v2h1v2h1v3h1v2h2v-6h1v2h1v3h1v2h1v2h1v2h1v3h1v2h1v2h1v-7h1v1h1v2h1v55h-47v-12h-1v-3h3v1h1v-4h-1v-10h-1v-3h1v2h1v1h1v1h1v-13h-1v-10h1v-12h1v1h2v1h1v-6h1v-2h2v1h1v1h1v-8h3v1h2zM0 204h1v2h1v2h1v2h1v3h1v2h1v3h1v-6h2v3h1v2h1v3h1v2h1v2h1v3h1v2h1v2h1v-9h1v3h1v2h1v2h1v2h1v3h1v2h1v2h1v2h1v-9h1v2h1v2h1v2h1v2h1v2h1v2h1v-9h1v2h1v2h1v2h1v2h1v2h1v1h1v-9h1v2h1v1h1v2h1v2h1v2h1v2h1v-10h1v2h1v2h1v3h1v2h1v2h1v2h1v2h1v-5h-1v-7h1v2h1v2h1v2h1v2h1v3h1v2h1v2h1v-10h-1v-3h1v2h1v3h1v2h1v2h1v2h1v3h-67zM69 247h1v2h1v3h1v3h1v1h-3v-2h-1zM197 247h1v2h1v3h1v3h1v1h-3v-2h-1zM76 250h1v2h-1zM204 250h1v2h-1zM77 252h1v3h1v1h-2zM205 252h1v3h1v1h-2z"/><path fill="#ff2b65" d="M0 0h21v6h-1v-1h-1v-1h-1v-3h-2v2h1v8h1v13h-1v-2h-1v-3h-1v4h1v5h1v5h1v10h-1v-1h-1v-2h-1v-3h-1v-2h-1v5h1v5h1v9h-2v-2h-1v-3h-1v-2h-1v-3h-1v3h1v5h1v5h1v2h-1v3h-1v-1h-2v-3h-1v-2h-1v4h1v6h-1v2h-1v-1h-1v-1h-1v-2h-1v11h-1v-1h-1zM51 0h1v2h-1zM57 0h2v4h-1v-2h-1zM63 0h3v6h-1v-2h-1v-2h-1zM69 0h3v1h1v7h-1v-2h-1v-2h-1v-2h-1zM75 0h4v2h1v5h1v7h-1v-2h-1v-2h-1v-3h-1v-2h-1v-3h-1zM81 0h5v2h1v-2h62v6h-1v-1h-1v-1h-1v-3h-2v2h1v8h1v13h-1v-2h-1v-3h-1v4h1v5h1v5h1v10h-1v-1h-1v-2h-1v-3h-1v-2h-1v5h1v5h1v9h-2v-2h-1v-3h-1v-2h-1v-3h-1v3h1v5h1v5h1v2h-1v3h-1v-1h-2v-3h-1v-2h-1v4h1v6h-1v2h-1v-1h-1v-1h-1v-2h-1v5h-1v2h-1v-2h-1v-2h-1v-2h-1v-3h-1v-2h-1v-3h-1v-4h-1v-3h-1v-3h-1v-3h-1v-3h-1v4h1v4h1v5h1v5h1v1h-1v1h-1v-1h-1v-3h-1v-2h-1v-2h-1v-3h-1v-3h-1v-3h-1v-3h-1v-3h-1v-3h-1v-3h-1v4h1v5h1v4h1v7h-1v-2h-1v-3h-1v-2h-1v-2h-1v-3h-1v-3h-1v-3h-1v-3h-1v-3h-1v-3h-1v-3h-1v-3h-1v-3h-1v3h1v4h1v4h1v5h1v5h1v2h-1v1h-1v-3h-1v-2h-1v-3h-1v-2h-1v-3h-1v-3h-1v-3h-1v-3h-1v-3h-1v-4h-1v-3h-1v-3h-1v-3h-1v5h1v4h1v5h1v7h-1v-2h-1v-2h-1v-3h-1v-2h-1v-3h-1v-3h-1v-3h-1v-3h-1zM179 0h1v2h-1zM185 0h2v4h-1v-2h-1zM191 0h3v6h-1v-2h-1v-2h-1zM197 0h3v1h1v7h-1v-2h-1v-2h-1v-2h-1zM203 0h4v2h1v5h1v7h-1v-2h-1v-2h-1v-3h-1v-2h-1v-3h-1zM209 0h5v2h1v-2h41v69h-1v-2h-1v-2h-1v-3h-1v-2h-1v-3h-1v-4h-1v-3h-1v-3h-1v-3h-1v-3h-1v4h1v4h1v5h1v5h1v1h-1v1h-1v-1h-1v-3h-1v-2h-1v-2h-1v-3h-1v-3h-1v-3h-1v-3h-1v-3h-1v-3h-1v-3h-1v4h1v5h1v4h1v7h-1v-2h-1v-3h-1v-2h-1v-2h-1v-3h-1v-3h-1v-3h-1v-3h-1v-3h-1v-3h-1v-3h-1v-3h-1v-3h-1v3h1v4h1v4h1v5h1v5h1v2h-1v1h-1v-3h-1v-2h-1v-3h-1v-2h-1v-3h-1v-3h-1v-3h-1v-3h-1v-3h-1v-4h-1v-3h-1v-3h-1v-3h-1v5h1v4h1v5h1v7h-1v-2h-1v-2h-1v-3h-1v-2h-1v-3h-1v-3h-1v-3h-1v-3h-1zM96 9h-1v1h1zM224 9h-1v1h1zM97 13h-1v1h1zM225 13h-1v1h1zM15 17h-1v1h1zM143 17h-1v1h1zM108 29h-1v2h1zM236 29h-1v2h1zM13 32h-1v2h1zM141 32h-1v2h1zM117 38h-1v2h1zM245 38h-1v2h1zM6 53h-1v2h1zM134 53h-1v2h1zM2 62h-1v1h1zM130 62h-1v1h1zM102 182h1v2h1v2h1v2h1v2h1v3h1v4h1v3h1v3h1v3h1v3h1v-4h-1v-5h-1v-4h-1v-4h2v2h1v2h1v2h1v3h1v3h1v3h1v3h1v3h1v3h1v3h1v2h1v-3h-1v-5h-1v-4h-1v-8h1v2h1v3h1v2h1v2h1v3h1v3h1v3h1v3h1v3h1v3h1v3h1v-4h-1v-5h-1v-4h-1v-7h1v2h1v2h1v3h1v2h1v3h1v3h1v3h1v3h1v4h1v3h1v3h1v3h1v3h1v3h1v-4h-1v-4h-1v-5h-1v-4h-1v-7h1v3h1v2h1v2h1v3h1v2h1v3h1v3h1v3h1v3h1v4h1v1h-63v-2h-1v-8h-1v-8h1v-2h-1v-3h1v3h1v2h1v-4h-1v-5h-1v-5h-1v-10h1v1h1v2h1v3h1v2h1v-4h-1v-5h-1v-5h-1v-7h2v1h1v3h1v3h1v2h1v-4h-1v-6h-1v-7h2v1h1v2h1v2h1v-11h1v1h2v2h1v2h1v-3h-1v-6h1zM230 182h1v2h1v2h1v1h1v3h1v3h1v4h1v3h1v3h1v3h1v3h1v-4h-1v-5h-1v-4h-1v-7h1v2h1v2h1v3h1v2h1v3h1v3h1v3h1v3h1v3h1v3h1v3h1v2h1v-3h-1v-5h-1v-4h-1v-8h1v2h1v3h1v2h1v2h1v3h1v3h1v3h1v37h-40v-2h-1v-8h-1v-8h1v-2h-1v-3h1v3h1v2h1v-4h-1v-5h-1v-5h-1v-10h1v1h1v2h1v3h1v2h1v-4h-1v-5h-1v-5h-1v-7h2v1h1v3h1v3h1v2h1v-4h-1v-6h-1v-7h2v1h1v2h1v2h1v-11h1v1h2v2h1v2h1v-3h-1v-6h1zM103 194h-1v1h1zM231 194h-1v1h1zM98 198h-1v3h1zM226 198h-1v3h1zM114 209h-1v3h1zM242 209h-1v3h1zM95 211h-1v1h1zM223 211h-1v1h1zM1 211h1v2h1v2h1v3h1v2h1v3h1v3h1v3h1v3h1v4h1v3h1v3h1v3h1v3h1v3h1v-4h-1v-4h-1v-5h-1v-4h-1v-7h1v3h1v2h1v2h1v3h1v2h1v3h1v3h1v3h1v3h1v4h1v1h-23v-34h1v3h1v3h1v3h1v-4h-1v-5h-1v-4h-1zM115 214h-1v1h1zM243 214h-1v1h1zM92 223h-1v2h1zM124 223h-1v1h1zM220 223h-1v2h1zM252 223h-1v1h1zM5 231h-1v3h1zM133 231h-1v3h1zM6 236h-1v1h1zM134 236h-1v1h1zM90 239h-1v1h1zM218 239h-1v1h1zM22 239h1v2h1v3h1v2h1v3h1v3h1v3h1v1h-5v-4h-1v-5h-1v-4h-1v-3h1zM150 239h1v2h1v3h1v2h1v3h1v3h1v3h1v1h-5v-4h-1v-5h-1v-4h-1v-3h1zM30 245h1v2h1v2h1v2h1v3h1v2h-4v-4h-1zM158 245h1v2h1v2h1v2h1v3h1v2h-4v-4h-1zM37 247h1v2h1v2h1v2h1v3h-3v-2h-1zM165 247h1v2h1v2h1v2h1v3h-3v-2h-1zM44 249h1v2h1v2h1v2h1v1h-4zM172 249h1v2h1v2h1v2h1v1h-4zM83 250h1v2h1v1h1v3h-3zM211 250h1v2h1v1h1v3h-3zM17 252h-1v2h1zM145 252h-1v2h1zM51 252h1v2h1v2h-2zM179 252h1v2h1v2h-2z"/><path fill="#fb2b4c" d="M0 0h9v5h1v6h1v5h1v4h-1v-2h-1v-3h-1v-2h-1v-2h-1v-3h-1v-2h-1v-2h-1v2h1v5h1v5h1v6h1v5h1v5h-1v-2h-1v-2h-1v-2h-1v-3h-1v-2h-1v-2h-1v4h1v5h1v6h1v5h1v5h-1v-2h-1v-2h-1v-2h-1v-3h-1v-2h-1zM12 0h2v4h-1v-2h-1zM95 0h2v2h1v4h1v4h-1v-3h-1v-3h-1v-3h-1zM101 0h4v5h1v4h1v5h1v5h1v4h-1v-3h-1v-3h-1v-3h-1v-3h-1v-3h-1v-3h-1v-3h-1zM107 0h4v1h1v4h1v4h1v5h1v4h1v5h1v5h1v4h1v4h-1v-3h-1v-3h-1v-3h-1v-3h-1v-3h-1v-3h-1v-3h-1v-3h-1v-3h-1v-3h-1v-3h-1zM113 0h5v1h1v-1h18v5h1v6h1v5h1v4h-1v-2h-1v-3h-1v-2h-1v-2h-1v-3h-1v-2h-1v-2h-1v2h1v5h1v5h1v6h1v5h1v5h-1v-2h-1v-2h-1v-2h-1v-3h-1v-2h-1v-2h-1v4h1v5h1v6h1v5h1v5h-1v-2h-1v-2h-1v-2h-1v-3h-1v-2h-1v-3h-1v-2h-1v2h1v6h1v5h1v6h1v6h-1v-2h-1v-2h-1v-3h-1v-3h-1v-3h-1v-4h-1v-4h-1v-4h-1v-3h-1v-4h-1v-3h-1v-3h-1v-3h-1v-3h-1v-3h-1v-3h-1zM140 0h2v4h-1v-2h-1zM223 0h2v2h1v4h1v4h-1v-3h-1v-3h-1v-3h-1zM229 0h4v5h1v4h1v5h1v5h1v4h-1v-3h-1v-3h-1v-3h-1v-3h-1v-3h-1v-3h-1v-3h-1zM235 0h4v1h1v4h1v4h1v5h1v4h1v5h1v5h1v4h1v4h-1v-3h-1v-3h-1v-3h-1v-3h-1v-3h-1v-3h-1v-3h-1v-3h-1v-3h-1v-3h-1v-3h-1zM241 0h5v1h1v-1h9v30h-1v-2h-1v2h1v6h1v13h-1v-3h-1v-3h-1v-3h-1v-4h-1v-4h-1v-4h-1v-3h-1v-4h-1v-3h-1v-3h-1v-3h-1v-3h-1v-3h-1v-3h-1zM120 3h-1v2h1zM248 3h-1v2h1zM14 5h1v2h-1zM121 6h-1v3h1zM142 5h1v2h-1zM249 6h-1v3h1zM99 11h1v2h-1zM227 11h1v2h-1zM2 16h-1v2h1zM100 15h1v2h-1zM130 16h-1v2h1zM228 15h1v2h-1zM12 21h1v1h-1zM140 21h1v1h-1zM109 24h1v2h-1zM237 24h1v2h-1zM110 28h1v1h-1zM238 28h1v1h-1zM9 33h1v2h-1zM137 33h1v2h-1zM119 37h1v2h-1zM247 37h1v2h-1zM0 41h1v6h1v6h-1v-2h-1zM6 45h1v2h-1zM134 45h1v2h-1zM2 53h1v2h-1zM130 53h1v2h-1zM105 193h1v2h-1zM233 193h1v2h-1zM106 197h1v3h-1zM234 197h1v3h-1zM107 200h1v3h-1zM235 200h1v3h-1zM101 201h1v2h1v3h1v2h1v2h1v3h1v3h1v4h1v4h1v5h1v3h1v3h1v3h1v3h1v3h1v3h1v3h1v4h1v2h-24v-4h-1v-5h-1v-5h-1v-5h1v2h1v3h1v2h1v2h1v3h1v2h1v-5h-1v-5h-1v-5h-1v-6h-1v-5h-1v-3h1v2h1v3h1v2h1v2h1v2h1v3h1v2h1v-3h-1v-6h-1v-5h-1v-6h-1v-5h-1v-3h1v2h1v3h1v2h1v2h1v3h1v2h1v2h1v-4h-1v-6h-1v-5h-1v-6h-1zM229 201h1v2h1v3h1v2h1v2h1v3h1v3h1v4h1v4h1v5h1v3h1v3h1v3h1v3h1v3h1v3h1v3h1v4h1v2h-24v-4h-1v-5h-1v-5h-1v-5h1v2h1v3h1v2h1v2h1v3h1v2h1v-5h-1v-5h-1v-5h-1v-6h-1v-5h-1v-3h1v2h1v3h1v2h1v2h1v2h1v3h1v2h1v-3h-1v-6h-1v-5h-1v-6h-1v-5h-1v-3h1v2h1v3h1v2h1v2h1v3h1v2h1v2h1v-4h-1v-6h-1v-5h-1v-6h-1zM108 204h1v1h-1zM236 204h1v1h-1zM110 211h1v1h-1zM238 211h1v1h-1zM111 214h1v3h-1zM239 214h1v3h-1zM112 218h1v3h1v3h1v3h1v2h1v3h1v3h1v3h1v3h1v4h1v3h1v3h1v3h1v2h-5v-3h-1v-4h-1v-5h-1v-4h-1v-4h-1v-5h-1v-5h-1v-4h-1zM240 218h1v3h1v3h1v3h1v2h1v3h1v3h1v3h1v3h1v4h1v3h1v3h1v3h1v2h-5v-3h-1v-4h-1v-5h-1v-4h-1v-4h-1v-5h-1v-5h-1v-4h-1zM120 224h1v2h-1zM248 224h1v2h-1zM106 227h-1v2h1zM234 227h-1v2h1zM121 227h1v3h-1zM249 227h1v3h-1zM122 230h1v3h1v3h1v3h1v3h1v3h1v3h1v3h1v3h1v2h-4v-3h-1v-4h-1v-4h-1v-5h-1v-5h-1zM250 230h1v3h1v3h1v3h1v3h1v3h1v11h-1v-3h-1v-4h-1v-4h-1v-5h-1v-5h-1zM1 234h1v1h-1zM129 234h1v1h-1zM91 235h1v1h-1zM219 235h1v1h-1zM2 237h1v2h-1zM130 237h1v2h-1zM103 240h-1v1h1zM231 240h-1v1h1zM3 240h1v3h1v3h1v3h1v3h1v4h-2v-3h-1v-5h-1v-4h-1zM131 240h1v3h1v3h1v3h1v3h1v4h-2v-3h-1v-5h-1v-4h-1zM0 248h1v3h1v3h1v2h-3zM89 250h1v2h-1zM217 250h1v2h-1zM100 252h-1v1h1zM228 252h-1v1h1zM90 253h1v2h1v1h-2zM218 253h1v2h1v1h-2z"/><path fill="#f12937" d="M0 0h1v3h1v4h-1v-3h-1zM121 0h3v4h1v6h1v6h-1v-2h-1v-3h-1v-3h-1v-5h-1zM127 0h2v3h1v4h-1v-3h-1v-2h-1zM249 0h3v4h1v6h1v6h-1v-2h-1v-3h-1v-3h-1v-5h-1zM255 0h1v2h-1zM126 16h1v3h-1zM254 16h1v3h-1zM104 236h1v1h-1zM232 236h1v1h-1zM105 238h1v2h1v3h1v2h1v3h1v4h1v4h-3v-3h-1v-5h-1v-6h-1zM233 238h1v2h1v3h1v2h1v3h1v4h1v4h-3v-3h-1v-5h-1v-6h-1zM101 248h1v1h-1zM229 248h1v1h-1zM102 250h1v2h1v3h1v1h-2v-2h-1zM230 250h1v2h1v3h1v1h-2v-2h-1z"/></svg>
<div class="cb" style="left:18px;top:311px"></div>
<svg class="a" style="left:18px;top:311px" width="13" height="13"><path d="M3 5 L5.5 7.5 L10 3 L10 5.6 L5.5 10.1 L3 7.6z" fill="#21a121"/></svg>
<div class="t" style="left:36.3px;top:312px;letter-spacing:-0.169px;">Podgląd w czasie rzeczywistym</div>
<div class="btn " style="left:17px;top:335px;width:258px;height:21px;line-height:20px;letter-spacing:-0.229px;padding-left:-0.23px"><u>O</u>dśwież podgląd</div>
<div class="t b" style="left:15.3px;top:369px;letter-spacing:0.467px;">Powiększenie</div>
<div class="btn " style="left:29px;top:389px;width:119px;height:21px;line-height:20px;letter-spacing:-0.484px;padding-left:-0.48px">Po<u>w</u>iększ</div>
<div class="btn " style="left:156px;top:389px;width:119px;height:21px;line-height:20px;letter-spacing:-0.383px;padding-left:-0.38px">Po<u>m</u>niejsz</div>
<div class="btn " style="left:29px;top:418px;width:119px;height:21px;line-height:20px;letter-spacing:-0.087px;padding-left:-0.09px">Cof<u>n</u>ij</div>
<div class="btn " style="left:156px;top:418px;width:119px;height:21px;line-height:20px;letter-spacing:-0.591px;padding-left:-0.59px">P<u>o</u>nów</div>
<div class="btn " style="left:17px;top:598px;width:83px;height:25px;line-height:24px;letter-spacing:-0.450px;padding-left:-0.45px">Pomo<u>c</u></div>
<div class="btn def" style="left:544px;top:598px;width:83px;height:25px;line-height:24px;letter-spacing:-1.203px;padding-left:-1.20px"><u>O</u>K</div>
<div class="btn " style="left:635px;top:598px;width:83px;height:25px;line-height:24px;letter-spacing:-0.099px;padding-left:-0.10px"><u>A</u>nuluj</div>
<div class="a" style="left:288px;top:62px;width:429px;height:511px;border:1px solid #919b9c;background:#fcfcfe;box-shadow:1px 0 0 #e8e8de"></div>
<div class="tab" style="left:290px;top:44px;width:59px;height:19px;"><div class="t" style="left:4px;top:3.6px;letter-spacing:-0.117px"><u>P</u>arametry</div></div>
<div class="tab" style="left:391px;top:44px;width:47px;height:19px;"><div class="t" style="left:3px;top:3.6px;letter-spacing:-0.094px"><u>F</u>raktale</div></div>
<div class="tab" style="left:348px;top:41px;width:44px;height:22px;background:#fcfcfe;border-top:none"><div class="t" style="left:6.4px;top:5.6px;letter-spacing:-0.265px">Ko<u>l</u>ory</div></div>
<div class="a" style="left:348px;top:41px;width:44px;height:3px;border-radius:3px 3px 0 0;background:linear-gradient(#e68b2c,#ffc73c 60%,#ffd468);"></div>
<div class="t b" style="left:301.3px;top:79px;letter-spacing:0.336px;">Liczba kolorów</div>
<div class="t" style="left:312.8px;top:102px;letter-spacing:-0.143px;">Liczba kolorów:</div>
<div class="a" style="left:393px;top:97px;width:257px;height:21px;border:1px dotted #000"></div>
<div class="line" style="left:395px;top:107px;width:253px"></div>
<div class="th" style="left:402px;top:99px"></div>
<div class="sp" style="left:655px;top:97px">256</div>
<div class="sb" style="left:694px;top:98px;height:9px"></div><div class="sb" style="left:694px;top:107px;height:10px"></div><svg class="a" style="left:694px;top:98px" width="11" height="20"><path d="M1.5 6.8 l3.5 -4 l3.5 4 l-2 0 l-1.5 -1.4 l-1.5 1.4z" fill="#1a1a1a"/><path d="M1.5 12.2 l3.5 4 l3.5 -4 l-2 0 l-1.5 1.4 l-1.5 -1.4z" fill="#1a1a1a"/></svg>
<div class="cb" style="left:316px;top:128px"></div>
<div class="t" style="left:334.3px;top:129px;letter-spacing:-0.109px;">Zastosowanie wygładzania loglog</div>
<div class="t b" style="left:301.3px;top:158px;letter-spacing:0.341px;">Gęstość kolorów</div>
<div class="t" style="left:312.8px;top:181px;letter-spacing:0.103px;">Czerwony:</div>
<div class="line" style="left:374px;top:186px;width:271px"></div>
<div class="th" style="left:636px;top:178px"></div>
<div class="sp" style="left:655px;top:176px">1,00</div>
<div class="sb dis" style="left:694px;top:177px;height:9px"></div><div class="sb" style="left:694px;top:186px;height:10px"></div><svg class="a" style="left:694px;top:177px" width="11" height="20"><path d="M1.5 6.8 l3.5 -4 l3.5 4 l-2 0 l-1.5 -1.4 l-1.5 1.4z" fill="#c4c4cc"/><path d="M1.5 12.2 l3.5 4 l3.5 -4 l-2 0 l-1.5 1.4 l-1.5 -1.4z" fill="#1a1a1a"/></svg>
<div class="t" style="left:312.8px;top:208px;letter-spacing:0.071px;">Zielony:</div>
<div class="line" style="left:374px;top:213px;width:271px"></div>
<div class="th" style="left:419px;top:205px"></div>
<div class="sp" style="left:655px;top:203px">0,17</div>
<div class="sb" style="left:694px;top:204px;height:9px"></div><div class="sb" style="left:694px;top:213px;height:10px"></div><svg class="a" style="left:694px;top:204px" width="11" height="20"><path d="M1.5 6.8 l3.5 -4 l3.5 4 l-2 0 l-1.5 -1.4 l-1.5 1.4z" fill="#1a1a1a"/><path d="M1.5 12.2 l3.5 4 l3.5 -4 l-2 0 l-1.5 1.4 l-1.5 -1.4z" fill="#1a1a1a"/></svg>
<div class="t" style="left:312.8px;top:235px;letter-spacing:-0.149px;">Niebieski:</div>
<div class="line" style="left:374px;top:240px;width:271px"></div>
<div class="th" style="left:580px;top:232px"></div>
<div class="sp" style="left:655px;top:230px">0,79</div>
<div class="sb" style="left:694px;top:231px;height:9px"></div><div class="sb" style="left:694px;top:240px;height:10px"></div><svg class="a" style="left:694px;top:231px" width="11" height="20"><path d="M1.5 6.8 l3.5 -4 l3.5 4 l-2 0 l-1.5 -1.4 l-1.5 1.4z" fill="#1a1a1a"/><path d="M1.5 12.2 l3.5 4 l3.5 -4 l-2 0 l-1.5 1.4 l-1.5 -1.4z" fill="#1a1a1a"/></svg>
<div class="t b" style="left:301.3px;top:264px;letter-spacing:0.423px;">Funkcja koloru</div>
<div class="t b" style="left:313.3px;top:283px;letter-spacing:0.479px;">Czerwony</div>
<div class="rb" style="left:328px;top:305px"></div>
<div class="t" style="left:345.8px;top:306px;letter-spacing:-0.306px;">Sinus</div>
<div class="rb on" style="left:328px;top:328px"></div>
<div class="t" style="left:345.8px;top:329px;letter-spacing:-0.250px;">Cosinus</div>
<div class="rb" style="left:328px;top:351px"></div>
<div class="t" style="left:345.8px;top:352px;letter-spacing:-0.081px;">Brak</div>
<div class="cb" style="left:328px;top:374px"></div>
<div class="t" style="left:345.8px;top:375px;letter-spacing:0.241px;">Inwersja</div>
<div class="t b" style="left:447.3px;top:283px;letter-spacing:0.453px;">Zielony</div>
<div class="rb" style="left:462px;top:305px"></div>
<div class="t" style="left:479.8px;top:306px;letter-spacing:-0.306px;">Sinus</div>
<div class="rb on" style="left:462px;top:328px"></div>
<div class="t" style="left:479.8px;top:329px;letter-spacing:-0.250px;">Cosinus</div>
<div class="rb" style="left:462px;top:351px"></div>
<div class="t" style="left:479.8px;top:352px;letter-spacing:-0.081px;">Brak</div>
<div class="cb" style="left:462px;top:374px"></div>
<div class="t" style="left:479.8px;top:375px;letter-spacing:0.241px;">Inwersja</div>
<div class="t b" style="left:581.3px;top:283px;letter-spacing:0.362px;">Niebieski</div>
<div class="rb on" style="left:596px;top:305px"></div>
<div class="t" style="left:613.8px;top:306px;letter-spacing:-0.306px;">Sinus</div>
<div class="rb" style="left:596px;top:328px"></div>
<div class="t" style="left:613.8px;top:329px;letter-spacing:-0.250px;">Cosinus</div>
<div class="rb" style="left:596px;top:351px"></div>
<div class="t" style="left:613.8px;top:352px;letter-spacing:-0.081px;">Brak</div>
<div class="cb" style="left:596px;top:374px"></div>
<div class="t" style="left:613.8px;top:375px;letter-spacing:0.241px;">Inwersja</div>
<div class="t b" style="left:301.3px;top:404px;letter-spacing:0.571px;">Tryb koloru</div>
<div class="rb on" style="left:316px;top:426px"></div>
<div class="t" style="left:334.3px;top:427px;letter-spacing:-0.196px;">Zgodnie z powyższym ustawieniem</div>
<div class="rb" style="left:316px;top:452px"></div>
<div class="t" style="left:334.3px;top:453px;letter-spacing:-0.022px;">Wykorzystanie aktywnego gradientu do obrazu</div>
<div class="btn" style="left:612px;top:446px;width:92px;height:26px"></div>
<div class="a" style="left:616px;top:450px;width:84px;height:18px;background:linear-gradient(90deg,#000,#fff)"></div>
<div class="a" style="left:491px;top:503px;width:37px;height:4px;background:linear-gradient(90deg,#000080,#303030)"></div>
<div class="a" style="left:491px;top:507px;width:37px;height:4px;background:linear-gradient(90deg,#303020,#a0a000)"></div>
<div class="a" style="left:491px;top:511px;width:37px;height:4px;background:linear-gradient(90deg,#a0a000,#f8f840)"></div>
<div class="a" style="left:491px;top:515px;width:37px;height:4px;background:linear-gradient(90deg,#f8f840,#f8f8c0)"></div>
<div class="a" style="left:491px;top:519px;width:37px;height:4px;background:linear-gradient(90deg,#f0f0c0,#8080ff)"></div>
<div class="a" style="left:491px;top:523px;width:37px;height:4px;background:linear-gradient(90deg,#9090ff,#2020d0)"></div>
<div class="a" style="left:491px;top:527px;width:37px;height:4px;background:linear-gradient(90deg,#2020d0,#000080)"></div>
<div class="a" style="left:525px;top:527px;width:3px;height:4px;background:#000"></div>
</div></body></html>
